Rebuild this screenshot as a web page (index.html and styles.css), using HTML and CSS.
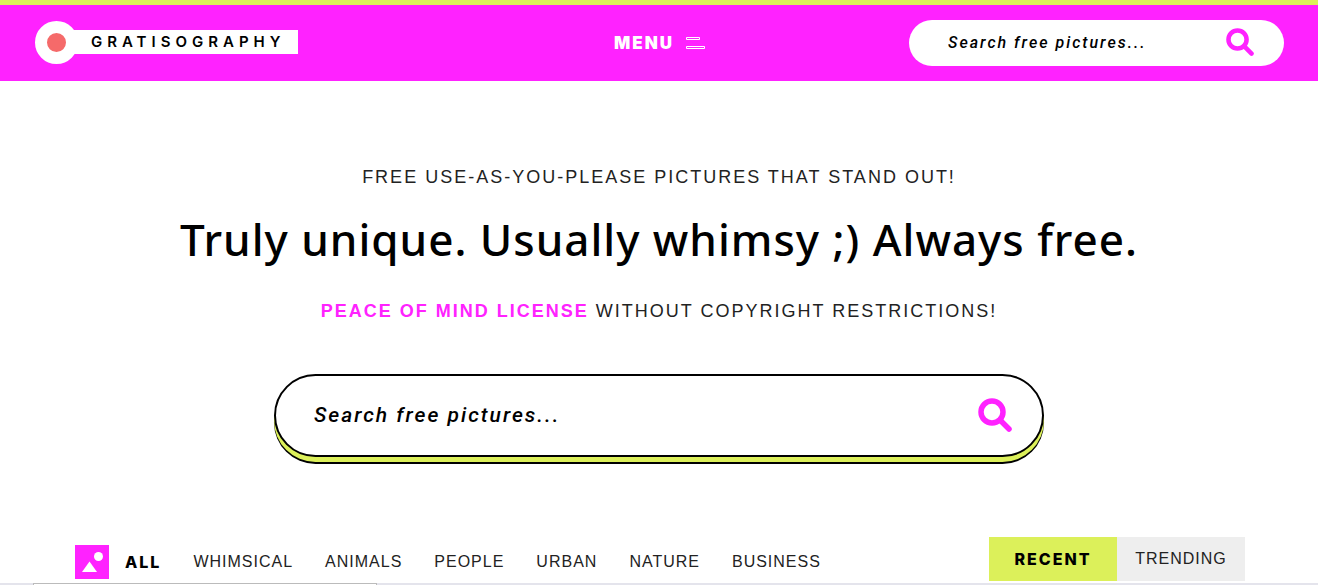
FILE: index.html
```html
<!DOCTYPE html>
<html lang="en">
<head>
  <meta charset="UTF-8">
  <meta name="viewport" content="width=device-width, initial-scale=1.0">
  <title>Gratisography</title>
  <link rel="stylesheet" href="styles.css">
</head>
<body>
  <header class="header">
    <a href="#" class="logo">
      <span class="logo-dot"></span>
      <span class="logo-text">GRATISOGRAPHY</span>
    </a>
    <button type="button" class="menu">
      MENU
      <svg width="19" height="14" viewBox="0 0 19 14" fill="none" stroke="#fff">
        <path d="M.5 1.500h13v2H.5zM.5 10.500h18v2H.5z"/>
      </svg>
    </button>
    <form class="search search-small">
      <input type="text" placeholder="Search free pictures..." aria-label="Search free pictures">
      <button type="submit" aria-label="Search">
        <svg viewBox="0 0 34 34" fill="none" stroke="#ff22ff" stroke-width="5.5">
          <circle cx="14" cy="14" r="11"/>
          <path d="M22 22l9 9" stroke-linecap="round"/>
        </svg>
      </button>
    </form>
  </header>

  <main>
    <section class="hero">
      <p>FREE USE-AS-YOU-PLEASE PICTURES THAT STAND OUT!</p>
      <h1>Truly unique. Usually whimsy ;) Always free.</h1>
      <p><a href="#">PEACE OF MIND LICENSE</a> WITHOUT COPYRIGHT RESTRICTIONS!</p>
      <form class="search search-big">
        <input type="text" placeholder="Search free pictures..." aria-label="Search free pictures">
        <button type="submit" aria-label="Search">
          <svg viewBox="0 0 34 34" fill="none" stroke="#ff22ff" stroke-width="5.5">
            <circle cx="14" cy="14" r="11"/>
            <path d="M22 22l9 9" stroke-linecap="round"/>
          </svg>
        </button>
      </form>
    </section>

    <div class="filters">
      <nav class="categories">
        <a href="#" class="all">
          <svg width="34" height="34" viewBox="0 0 34 34">
            <path fill="#ff22ff" d="M0 0h34v34H0z"/>
            <path fill="#fff" d="M7 27l7.500-10.500 7.500 10.500z"/>
            <circle cx="23.500" cy="11.500" r="4.500" fill="#fff"/>
          </svg>
          ALL
        </a>
        <a href="#">WHIMSICAL</a>
        <a href="#">ANIMALS</a>
        <a href="#">PEOPLE</a>
        <a href="#">URBAN</a>
        <a href="#">NATURE</a>
        <a href="#">BUSINESS</a>
      </nav>
      <div class="sort">
        <button type="button" class="active">RECENT</button>
        <button type="button">TRENDING</button>
      </div>
    </div>
    <div class="pictures">
      <div class="card"></div>
    </div>
  </main>
</body>
</html>
```
FILE: styles.css
```css
* {
  margin: 0;
  padding: 0;
  box-sizing: border-box;
}
body {
  background: #fff;
  color: #000;
  font-family: "Liberation Sans", Arial, sans-serif;
  overflow-x: hidden;
}
a {
  color: inherit;
  text-decoration: none;
}
button {
  border: none;
  background: none;
  color: inherit;
  cursor: pointer;
}
.header {
  display: grid;
  grid-template-columns: 1fr auto 1fr;
  align-items: center;
  padding: 15px 34px 15px 35px;
  border-top: 5px solid #dcf05a;
  background: #ff22ff;
}
.logo {
  display: flex;
  align-items: center;
  padding-bottom: 2px;
}
.logo-dot {
  width: 43px;
  height: 43px;
  border: 12px solid #fff;
  border-radius: 50%;
  background: #f56a6a;
}
.logo-text {
  margin-left: -4px;
  padding: 0 13px 0 17px;
  background: #fff;
  font-family: Inter, sans-serif;
  font-size: 15px;
  font-weight: 600;
  line-height: 24px;
  letter-spacing: 5px;
}
.menu {
  display: flex;
  align-items: center;
  gap: 12px;
  color: #fff;
  font-family: Inter, sans-serif;
  font-size: 17px;
  font-weight: 900;
  letter-spacing: 2px;
}
.search {
  display: flex;
  align-items: center;
  background: #fff;
}
.search input {
  flex: 1;
  min-width: 0;
  border: none;
  outline: none;
  background: none;
  font-family: Roboto, sans-serif;
  font-style: italic;
  font-weight: 500;
  letter-spacing: 2px;
}
.search input::placeholder {
  color: #000;
}
.search svg {
  display: block;
  width: 100%;
}
.search-small {
  justify-self: end;
  width: 100%;
  max-width: 375px;
  height: 46px;
  padding: 0 30px 2px 39px;
  border-radius: 23px;
}
.search-small input {
  font-size: 16px;
}
.search-small button {
  width: 28px;
}
.hero {
  display: flex;
  flex-direction: column;
  align-items: center;
  padding: 84px 20px 0;
  text-align: center;
}
.hero p {
  color: #222;
  font-size: 18px;
  line-height: 24px;
  letter-spacing: 2px;
}
.hero p a {
  color: #ff22ff;
  font-weight: 700;
}
h1 {
  margin: 19px 0 29px;
  font-family: "Noto Sans", sans-serif;
  font-size: 44px;
  font-weight: 500;
  line-height: 62px;
  letter-spacing: 1px;
}
.search-big {
  width: 100%;
  max-width: 770px;
  height: 83px;
  margin-top: 51px;
  padding: 0 30px 2px 38px;
  border: 2px solid #000;
  border-radius: 42px;
  box-shadow: 0 5px #dcf05a, 0 7px #000;
}
.search-big input {
  font-size: 21px;
}
.search-big button {
  width: 34px;
}
.filters {
  display: flex;
  justify-content: space-between;
  align-items: flex-start;
  padding: 80px 73px 2px 75px;
}
.categories {
  display: flex;
  align-items: center;
  gap: 32px;
  padding-top: 8px;
  color: #222;
  font-size: 16px;
  letter-spacing: 1px;
}
.all {
  display: flex;
  align-items: center;
  gap: 16px;
  color: #000;
  font-family: Inter, sans-serif;
  font-weight: 800;
  letter-spacing: 2px;
}
.sort {
  display: flex;
}
.sort button {
  width: 128px;
  height: 44px;
  background: #eee;
  color: #222;
  font-family: inherit;
  font-size: 16px;
  letter-spacing: 1px;
}
.sort .active {
  background: #dcf05a;
  color: #000;
  font-family: Inter, sans-serif;
  font-weight: 800;
  letter-spacing: 2px;
}
.pictures {
  height: 2px;
  padding-left: 33px;
  background: #e4e4ec;
  overflow: hidden;
}
.card {
  width: 344px;
  height: 240px;
  border: 1px solid #bbb;
  background: #fff;
}
```
